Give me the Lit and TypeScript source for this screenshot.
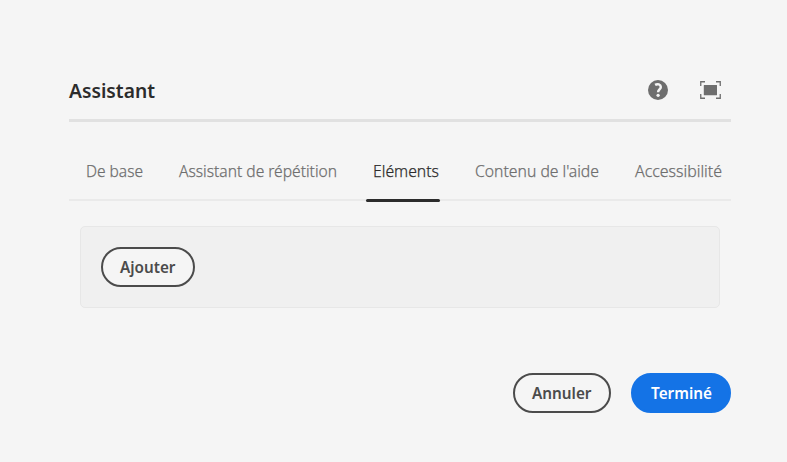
import { LitElement, html, css } from "lit";
import { customElement, property } from "lit/decorators.js";

/** A single line of text fitted to a given width. */
@customElement("fit-label")
class FitLabel extends LitElement {
  @property() text = "";
  @property({ type: Number }) width = 0;

  static styles = css`
    :host { display: block; flex: none; }
    svg { display: block; overflow: visible; fill: currentColor; }
  `;

  render() {
    return html`<svg width=${this.width} height="24">
      <text x="0" y="18" textLength=${this.width} lengthAdjust="spacingAndGlyphs">${this.text}</text>
    </svg>`;
  }
}

const TABS = [
  { text: "De base", width: 57 },
  { text: "Assistant de répétition", width: 158 },
  { text: "Eléments", width: 66, active: true },
  { text: "Contenu de l'aide", width: 124 },
  { text: "Accessibilité", width: 87 },
];

@customElement("app-root")
class AppRoot extends LitElement {
  static styles = css`
    :host {
      display: block;
      box-sizing: border-box;
      height: 462px;
      padding: 60px 56px 0 69px;
      background: #f5f5f5;
      font-family: "Noto Sans", "Open Sans", sans-serif;
      color: #2c2c2c;
    }
    .header {
      display: flex;
      align-items: center;
      box-sizing: border-box;
      width: 662px;
      height: 62px;
      border-bottom: 3px solid #e1e1e1;
    }
    .title { font-size: 20.5px; font-weight: 600; margin-top: 5px; }
    .icons {
      display: flex;
      align-items: center;
      gap: 32px;
      margin: 1px 10px 0 auto;
      color: #6e6e6e;
    }
    .icons svg { display: block; }
    .tabs {
      display: flex;
      gap: 22px;
      box-sizing: border-box;
      width: 662px;
      height: 79px;
      padding: 37px 0 0 9.5px;
      border-bottom: 2px solid #eaeaea;
      font-size: 17px;
      font-weight: 300;
      color: #6e6e6e;
      stroke: currentColor;
      stroke-width: 0.25px;
    }
    .tab { box-sizing: border-box; height: 43px; padding: 0 7px; }
    .tab.active {
      position: relative;
      color: #2c2c2c;
      padding-right: 1px;
      margin: 0 6px 0 0;
    }
    .tab.active::after {
      content: "";
      position: absolute;
      left: 0;
      right: 0;
      bottom: 0;
      height: 3px;
      border-radius: 1.5px;
      background: #2c2c2c;
    }
    .panel {
      display: flex;
      box-sizing: border-box;
      width: 640px;
      height: 82px;
      margin: 25px 0 0 11px;
      padding: 20px;
      background: #f0f0f0;
      border: 1px solid #e7e7e7;
      border-radius: 5px;
    }
    .button {
      display: flex;
      justify-content: center;
      box-sizing: border-box;
      height: 40px;
      margin: 0;
      padding: 6px 0 0;
      border: 2px solid #4b4b4b;
      border-radius: 20px;
      background: #f5f5f5;
      color: #4b4b4b;
      font: 600 16.5px "Noto Sans", "Open Sans", sans-serif;
    }
    .add { width: 94px; }
    .cancel { width: 98px; }
    .done { width: 100px; background: #1473e6; border-color: #1473e6; color: #fff; }
    .footer {
      display: flex;
      justify-content: flex-end;
      gap: 20px;
      width: 662px;
      margin-top: 65px;
    }
  `;

  render() {
    return html`
      <div class="header">
        <fit-label class="title" text="Assistant" .width=${86}></fit-label>
        <div class="icons">
          <svg width="20" height="20" viewBox="0 0 20 20">
            <circle cx="10" cy="10" r="10" fill="currentColor" />
            <path d="M7.1 4.9C9.6 3.4 12.8 4.4 12.8 7C12.8 9.4 10.1 9.5 10.1 12.2" fill="none" stroke="#f5f5f5" stroke-width="2.5" />
            <circle cx="10.1" cy="15.3" r="1.65" fill="#f5f5f5" />
          </svg>
          <svg width="21" height="18" viewBox="0 0 21 18">
            <path d="M.75 5V.75H5M16 .75H20.25V5M20.25 13V17.25H16M5 17.25H.75V13" fill="none" stroke="currentColor" stroke-width="1.3" />
            <rect x="3.8" y="3.9" width="13.2" height="10.4" rx=".3" fill="currentColor" />
          </svg>
        </div>
      </div>
      <div class="tabs">
        ${TABS.map(
          (t) => html`<div class="tab ${t.active ? "active" : ""}">
            <fit-label .text=${t.text} .width=${t.width}></fit-label>
          </div>`,
        )}
      </div>
      <div class="panel">
        <button class="button add"><fit-label text="Ajouter" .width=${55.5}></fit-label></button>
      </div>
      <div class="footer">
        <button class="button cancel"><fit-label text="Annuler" .width=${59.5}></fit-label></button>
        <button class="button done"><fit-label text="Terminé" .width=${61}></fit-label></button>
      </div>
    `;
  }
}
